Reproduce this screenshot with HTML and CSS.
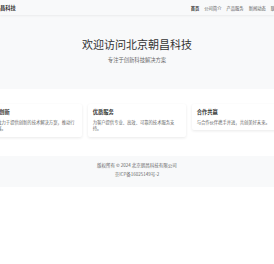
FILE: index.html
```html
<!DOCTYPE html>
<html lang="zh-CN">
<head>
    <meta charset="UTF-8">
    <meta name="viewport" content="width=device-width, initial-scale=1.0">
    <title>北京朝昌科技</title>
    <link rel="stylesheet" href="styles.css">
</head>
<body>
    <header class="site-header">
        <div class="container header-inner">
            <div class="logo">北京朝昌科技</div>
            <nav class="nav">
                <a href="#" class="active">首页</a>
                <a href="#">公司简介</a>
                <a href="#">产品服务</a>
                <a href="#">新闻动态</a>
                <a href="#">联系我们</a>
            </nav>
        </div>
    </header>

    <section class="hero">
        <h1>欢迎访问北京朝昌科技</h1>
        <p>专注于创新科技解决方案</p>
    </section>

    <section class="features">
        <div class="container cards">
            <div class="card">
                <h3>技术创新</h3>
                <p>我们致力于提供创新的技术解决方案，推动行业发展。</p>
            </div>
            <div class="card">
                <h3>优质服务</h3>
                <p>为客户提供专业、高效、可靠的技术服务支持。</p>
            </div>
            <div class="card">
                <h3>合作共赢</h3>
                <p>与合作伙伴携手并进，共创美好未来。</p>
            </div>
        </div>
    </section>

    <footer class="site-footer">
        <p>版权所有 © 2024 北京朝昌科技有限公司</p>
        <p>京ICP备16025149号-2</p>
    </footer>
</body>
</html>
```

FILE: styles.css
```css
body {
    font-family: "Noto Sans CJK SC", "Noto Sans", sans-serif;
    background-color: #ffffff;
    color: #333;
    margin: 0;
    padding: 0;
    overflow: hidden;
}

.site-header,
.features {
    display: flex;
    justify-content: center;
}

.container {
    flex: none;
    width: 306px;
}

.site-header {
    background-color: #f8f9fa;
    height: 15px;
    box-shadow: 0 1px 2px rgba(0, 0, 0, 0.06);
    position: relative;
}

.header-inner {
    display: flex;
    justify-content: space-between;
    align-items: center;
}

.logo {
    font-size: 5.3px;
    font-weight: bold;
    color: #333;
}

.nav {
    display: flex;
    gap: 5px;
    padding-right: 2px;
}

.nav a {
    font-size: 4.3px;
    color: #555;
    text-decoration: none;
}

.nav a.active {
    color: #333;
    font-weight: bold;
}

.hero {
    background-color: #f8f9fa;
    text-align: center;
    padding: 21px 0 25px;
}

.hero h1 {
    font-size: 11px;
    line-height: 16px;
    font-weight: normal;
    color: #333;
    margin: 0;
}

.hero p {
    font-size: 5.3px;
    line-height: 8px;
    color: #666;
    margin: 4px 0 0;
}

.features {
    padding: 15px 0 19px;
}

.cards {
    display: flex;
    align-items: flex-start;
    gap: 6px;
}

.card {
    flex: 1;
    background-color: #ffffff;
    border-radius: 2px;
    box-shadow: 0 1px 3px rgba(0, 0, 0, 0.09);
    padding: 4.7px;
}

.card h3 {
    font-size: 5.3px;
    line-height: 6px;
    color: #333;
    margin: 0 0 3.9px;
}

.card p {
    font-size: 4.3px;
    line-height: 6.8px;
    color: #666;
    margin: 0;
}

.site-footer {
    background-color: #f8f9fa;
    text-align: center;
    padding: 6.6px 0 8.9px;
}

.site-footer p {
    font-size: 4.5px;
    line-height: 6.8px;
    color: #666;
    margin: 0;
}

.site-footer p + p {
    margin-top: 1.9px;
}
```
